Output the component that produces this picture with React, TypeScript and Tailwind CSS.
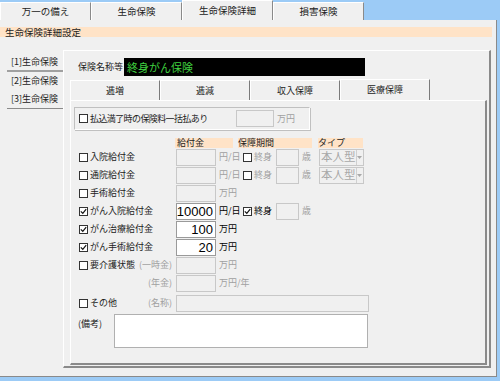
import React from 'react';

function Box({ checked }: { checked?: boolean }) {
  return (
    <span className="inline-flex w-[9px] h-[9px] shrink-0 border border-[#333] bg-white items-center justify-center mr-[2px]">
      {checked && (
        <svg width="7" height="7" viewBox="0 0 7 7">
          <path d="M0.8 3.4 L2.8 5.4 L6.2 1.2" stroke="#111" strokeWidth="1.2" fill="none" />
        </svg>
      )}
    </span>
  );
}

function Field({ w, value, on }: { w: string; value?: string; on?: boolean }) {
  return (
    <div
      className={`${w} h-[17px] shrink-0 border flex items-center justify-end pr-[2px] text-[13px] leading-none font-['Liberation_Sans',sans-serif] ${
        on ? 'bg-white border-[#9a9a9a] text-black' : 'bg-[#f0f0f0] border-[#c8c8c8]'
      }`}
    >
      {value}
    </div>
  );
}

function Period({ on }: { on?: boolean }) {
  return (
    <div className="flex items-center w-[76px]">
      <Box checked={on} />
      <span className={`w-[22px] ${on ? 'text-black' : 'text-[#a0a0a0]'}`}>終身</span>
      <Field w="w-[23px]" />
      <span className="pl-[3px] text-[#a0a0a0]">歳</span>
    </div>
  );
}

function TypeSelect() {
  return (
    <div className="w-[45px] h-[17px] border border-[#c8c8c8] bg-[#f0f0f0] flex items-center text-[11.5px] text-[#a8a8a8] leading-none">
      <span className="flex-1 pl-[1px]">本人型</span>
      <span className="w-[9px] h-[15px] border-l border-[#d0d0d0] flex items-center justify-center">
        <svg width="5" height="3" viewBox="0 0 5 3">
          <path d="M0 0 H5 L2.5 3 Z" fill="#a8a8a8" />
        </svg>
      </span>
    </div>
  );
}

function Row({
  label,
  checked,
  value,
  unit,
  unitOn,
  period,
  periodOn,
  type,
}: {
  label: string;
  checked?: boolean;
  value?: string;
  unit: string;
  unitOn?: boolean;
  period?: boolean;
  periodOn?: boolean;
  type?: boolean;
}) {
  return (
    <div className="flex items-center h-[18px] pl-[8px]">
      <div className="w-[97px] flex items-center">
        <Box checked={checked} />
        <span>{label}</span>
      </div>
      <Field w="w-[40px]" value={value} on={!!value} />
      <span className={`w-[27px] pl-[3px] ${unitOn ? 'text-black' : 'text-[#a0a0a0]'}`}>{unit}</span>
      {period && <Period on={periodOn} />}
      {type && <TypeSelect />}
    </div>
  );
}

export default function App() {
  const topTabs = ['万一の備え', '生命保険', '生命保険詳細', '損害保険'];
  const subTabs = ['逓増', '逓減', '収入保障', '医療保障'];

  return (
    <div className="w-[500px] h-[381px] bg-[#9ccbf6] flex flex-col overflow-hidden whitespace-nowrap text-[9px] text-[#222] font-['Noto_Sans_CJK_JP','Noto_Sans',sans-serif]">
      {/* top tabs */}
      <div className="flex h-[20px] items-end">
        {topTabs.map((t, i) => (
          <div
            key={t}
            className={`w-[91px] ${i === 2 ? 'h-[20px]' : 'h-[18px]'} bg-[#f0f0f0] border-t border-l border-white border-r border-r-[#8a8a8a] flex items-center justify-center text-[9.5px]`}
          >
            {t}
          </div>
        ))}
      </div>

      {/* main panel */}
      <div className="w-[497px] h-[357px] bg-[#f0f0f0] border-r border-b border-[#8a8a8a] flex flex-col">
        <div className="mt-[7px] h-[10px] w-[492px] bg-[#ffe3c7] leading-[10px] pl-[5px] text-[9.5px]">生命保険詳細設定</div>

        <div className="flex mt-[13px]">
          {/* side tabs */}
          <div className="w-[56px] ml-[7px] pt-[4px] flex flex-col">
            <div className="h-[18px] pl-[4px] border-b-2 border-[#a0a0a0] leading-[16px]">[1]生命保険</div>
            <div className="h-[18px] pl-[4px] leading-[18px]">[2]生命保険</div>
            <div className="h-[19px] pl-[4px] border-b border-[#8a8a8a] leading-[18px]">[3]生命保険</div>
          </div>

          {/* inner panel */}
          <div className="w-[428px] h-[318px] border-l border-t border-white border-r-2 border-b-2 border-r-[#8a8a8a] border-b-[#8a8a8a] flex flex-col">
            <div className="flex items-center h-[18px] mt-[7px] pl-[14px]">
              <span className="w-[46px]">保険名称等</span>
              <div className="w-[241px] h-[18px] bg-black text-[#3fcf3f] text-[11px] leading-[18px] pl-[3px]">終身がん保険</div>
            </div>

            {/* sub tabs */}
            <div className="flex h-[21px] items-end mt-[3px] ml-[6px]">
              {subTabs.map((t, i) => (
                <div
                  key={t}
                  className={`w-[90px] ${i === 3 ? 'h-[21px]' : 'h-[20px]'} bg-[#f0f0f0] border-t border-l border-white border-r border-r-[#7a7a7a] flex items-center justify-center`}
                >
                  {t}
                </div>
              ))}
            </div>

            {/* content panel */}
            <div className="ml-[6px] w-[417px] h-[265px] border-l border-t border-white border-r-2 border-b-2 border-r-[#8a8a8a] border-b-[#8a8a8a] flex flex-col">
              <div className="ml-[3px] mt-[6px] w-[236px] h-[23px] border border-[#c0c0c0] border-r-white border-b-white shadow-[1px_1px_0_#c0c0c0] flex items-center pl-[4px]">
                <Box />
                <span className="w-[146px] tracking-[-0.6px]">払込満了時の保険料一括払あり</span>
                <Field w="w-[38px]" />
                <span className="pl-[3px] text-[#a0a0a0]">万円</span>
              </div>

              <div className="flex mt-[8px] h-[10px] leading-[10px] pl-[104px]">
                <div className="w-[58px] bg-[#ffe3c7] pl-[2px]">給付金</div>
                <div className="w-[74px] ml-[5px] bg-[#ffe3c7]">保障期間</div>
                <div className="w-[45px] ml-[6px] bg-[#ffe3c7]">タイプ</div>
              </div>

              <Row label="入院給付金" unit="円/日" period type />
              <Row label="通院給付金" unit="円/日" period type />
              <Row label="手術給付金" unit="万円" />
              <Row label="がん入院給付金" checked value="10000" unit="円/日" unitOn period periodOn />
              <Row label="がん治療給付金" checked value="100" unit="万円" unitOn />
              <Row label="がん手術給付金" checked value="20" unit="万円" unitOn />

              <div className="flex items-center h-[18px] pl-[8px]">
                <div className="w-[97px] flex items-center">
                  <Box />
                  <span className="w-[49px]">要介護状態</span>
                  <span className="text-[#a0a0a0]">(一時金)</span>
                </div>
                <Field w="w-[40px]" />
                <span className="pl-[3px] text-[#a0a0a0]">万円</span>
              </div>
              <div className="flex items-center h-[18px] pl-[8px]">
                <div className="w-[97px] flex justify-end pr-[4px] text-[#a0a0a0]">(年金)</div>
                <Field w="w-[40px]" />
                <span className="pl-[3px] text-[#a0a0a0]">万円/年</span>
              </div>

              <div className="flex items-center h-[18px] mt-[2px] pl-[8px]">
                <div className="w-[97px] flex items-center">
                  <Box />
                  <span className="w-[58px]">その他</span>
                  <span className="text-[#a0a0a0]">(名称)</span>
                </div>
                <Field w="w-[193px]" />
              </div>

              <div className="flex mt-[2px] pl-[7px]">
                <span className="w-[36px] pt-[3px]">(備考)</span>
                <div className="w-[254px] h-[34px] bg-white border border-[#b0b0b0]" />
              </div>
            </div>
          </div>
        </div>
      </div>
    </div>
  );
}
